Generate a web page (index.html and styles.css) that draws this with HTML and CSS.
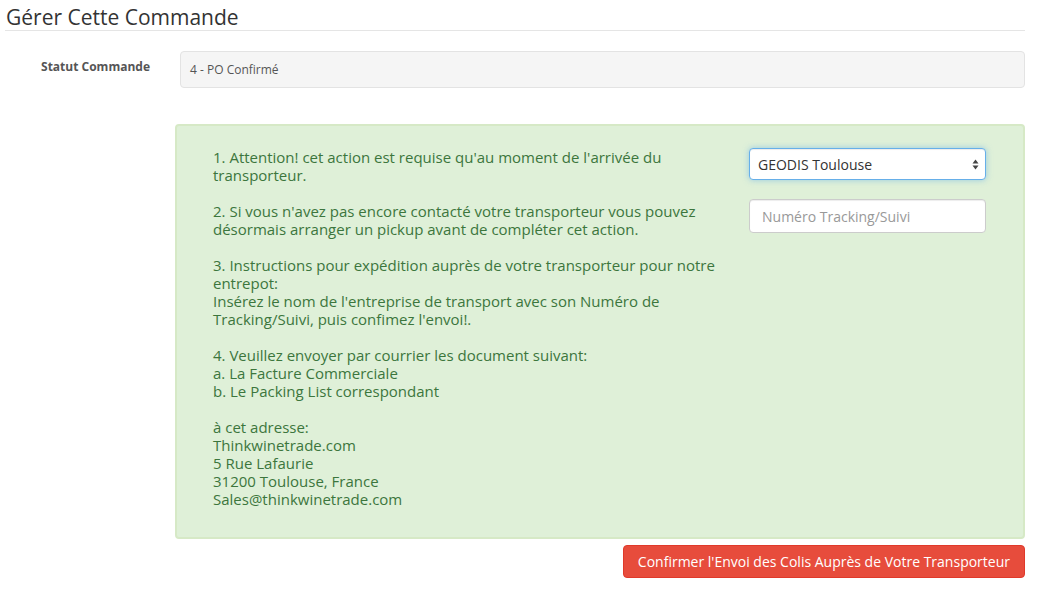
FILE: index.html
```html
<!DOCTYPE html>
<html lang="fr">
<head>
<meta charset="utf-8">
<title>Gérer Cette Commande</title>
<link rel="stylesheet" href="styles.css">
</head>
<body>
<div class="page">
  <h2 class="title">Gérer Cette Commande</h2>

  <div class="row">
    <label class="label">Statut Commande</label>
    <div class="well">4 - PO Confirmé</div>
  </div>

  <div class="alert">
    <div class="instructions">
      <p>1. Attention! cet action est requise qu'au moment de l'arrivée du<br>transporteur.</p>
      <p>2. Si vous n'avez pas encore contacté votre transporteur vous pouvez<br>désormais arranger un pickup avant de compléter cet action.</p>
      <p>3. Instructions pour expédition auprès de votre transporteur pour notre<br>entrepot:<br>Insérez le nom de l'entreprise de transport avec son Numéro de<br>Tracking/Suivi, puis confimez l'envoi!.</p>
      <p>4. Veuillez envoyer par courrier les document suivant:<br>a. La Facture Commerciale<br>b. Le Packing List correspondant</p>
      <p>à cet adresse:<br>Thinkwinetrade.com<br>5 Rue Lafaurie<br>31200 Toulouse, France<br>Sales@thinkwinetrade.com</p>
    </div>
    <div class="fields">
      <div class="select-wrap">
        <select class="select">
          <option>GEODIS Toulouse</option>
        </select>
        <svg class="select-arrows" width="7" height="11" viewBox="0 0 7 11"><path d="M3.5 0.5 L6.5 4.5 H0.5 Z M3.5 10.5 L6.5 6.5 H0.5 Z" fill="#444"/></svg>
      </div>
      <input class="input" type="text" placeholder="Numéro Tracking/Suivi">
    </div>
  </div>

  <div class="actions">
    <button class="btn-danger" type="button">Confirmer l'Envoi des Colis Auprès de Votre Transporteur</button>
  </div>
</div>
</body>
</html>
```

FILE: styles.css
```css
* { box-sizing: border-box; }

html, body {
  margin: 0;
  padding: 0;
  background: #ffffff;
}

body {
  font-family: "Open Sans", "Liberation Sans", sans-serif;
  color: #333333;
}

.page {
  width: 1025px;
  padding-left: 5px;
}

.title {
  margin: 0;
  padding: 6px 0 2px 1px;
  font-size: 21px;
  line-height: 22px;
  font-weight: 400;
  color: #333333;
  border-bottom: 1px solid #e5e5e5;
}

.row {
  display: flex;
  margin-top: 20px;
}

.label {
  width: 175px;
  flex: 0 0 175px;
  padding: 7px 30px 0 0;
  text-align: right;
  font-size: 12px;
  font-weight: 700;
  color: #555555;
  line-height: 17px;
}

.well {
  flex: 1;
  height: 37px;
  background: #f5f5f5;
  border: 1px solid #e3e3e3;
  border-radius: 4px;
  padding: 9px 9px;
  font-size: 12px;
  line-height: 17px;
  color: #555555;
}

.alert {
  display: flex;
  margin: 36px 0 0 170px;
  background: #dff0d8;
  border: 2px solid #d6e9c6;
  border-radius: 4px;
  padding: 22px 36px 29px 36px;
  color: #3c763d;
  font-size: 15px;
  line-height: 18px;
}

.instructions {
  width: 522px;
  flex: 0 0 522px;
  white-space: nowrap;
}

.instructions p {
  margin: 0 0 18px 0;
}

.instructions p:last-child {
  margin-bottom: 0;
}

.fields {
  margin-left: 14px;
  width: 237px;
  display: flex;
  flex-direction: column;
  gap: 19px;
}

.select-wrap {
  position: relative;
}

.select {
  -webkit-appearance: none;
  appearance: none;
  width: 237px;
  height: 32px;
  border: 1px solid #66afe9;
  border-radius: 4px;
  box-shadow: inset 0 1px 1px rgba(0,0,0,.075), 0 0 6px rgba(102,175,233,.6);
  background: #ffffff;
  padding: 0 8px;
  font-family: "Open Sans", "Liberation Sans", sans-serif;
  font-size: 14px;
  color: #333333;
  outline: none;
}

.select-arrows {
  position: absolute;
  right: 7px;
  top: 11px;
}

.input {
  width: 237px;
  height: 34px;
  border: 1px solid #cccccc;
  border-radius: 4px;
  background: #ffffff;
  padding: 0 12px;
  font-family: "Open Sans", "Liberation Sans", sans-serif;
  font-size: 14px;
  color: #555555;
  box-shadow: inset 0 1px 1px rgba(0,0,0,.075);
  outline: none;
}

.input::placeholder {
  color: #999999;
}

.actions {
  display: flex;
  justify-content: flex-end;
  margin-top: 6px;
}

.btn-danger {
  height: 33px;
  padding: 0 14px;
  background: #e74c3c;
  border: 1px solid #e0392a;
  border-radius: 4px;
  color: #ffffff;
  font-family: "Open Sans", "Liberation Sans", sans-serif;
  font-size: 14px;
  line-height: 19px;
  cursor: pointer;
}
```
